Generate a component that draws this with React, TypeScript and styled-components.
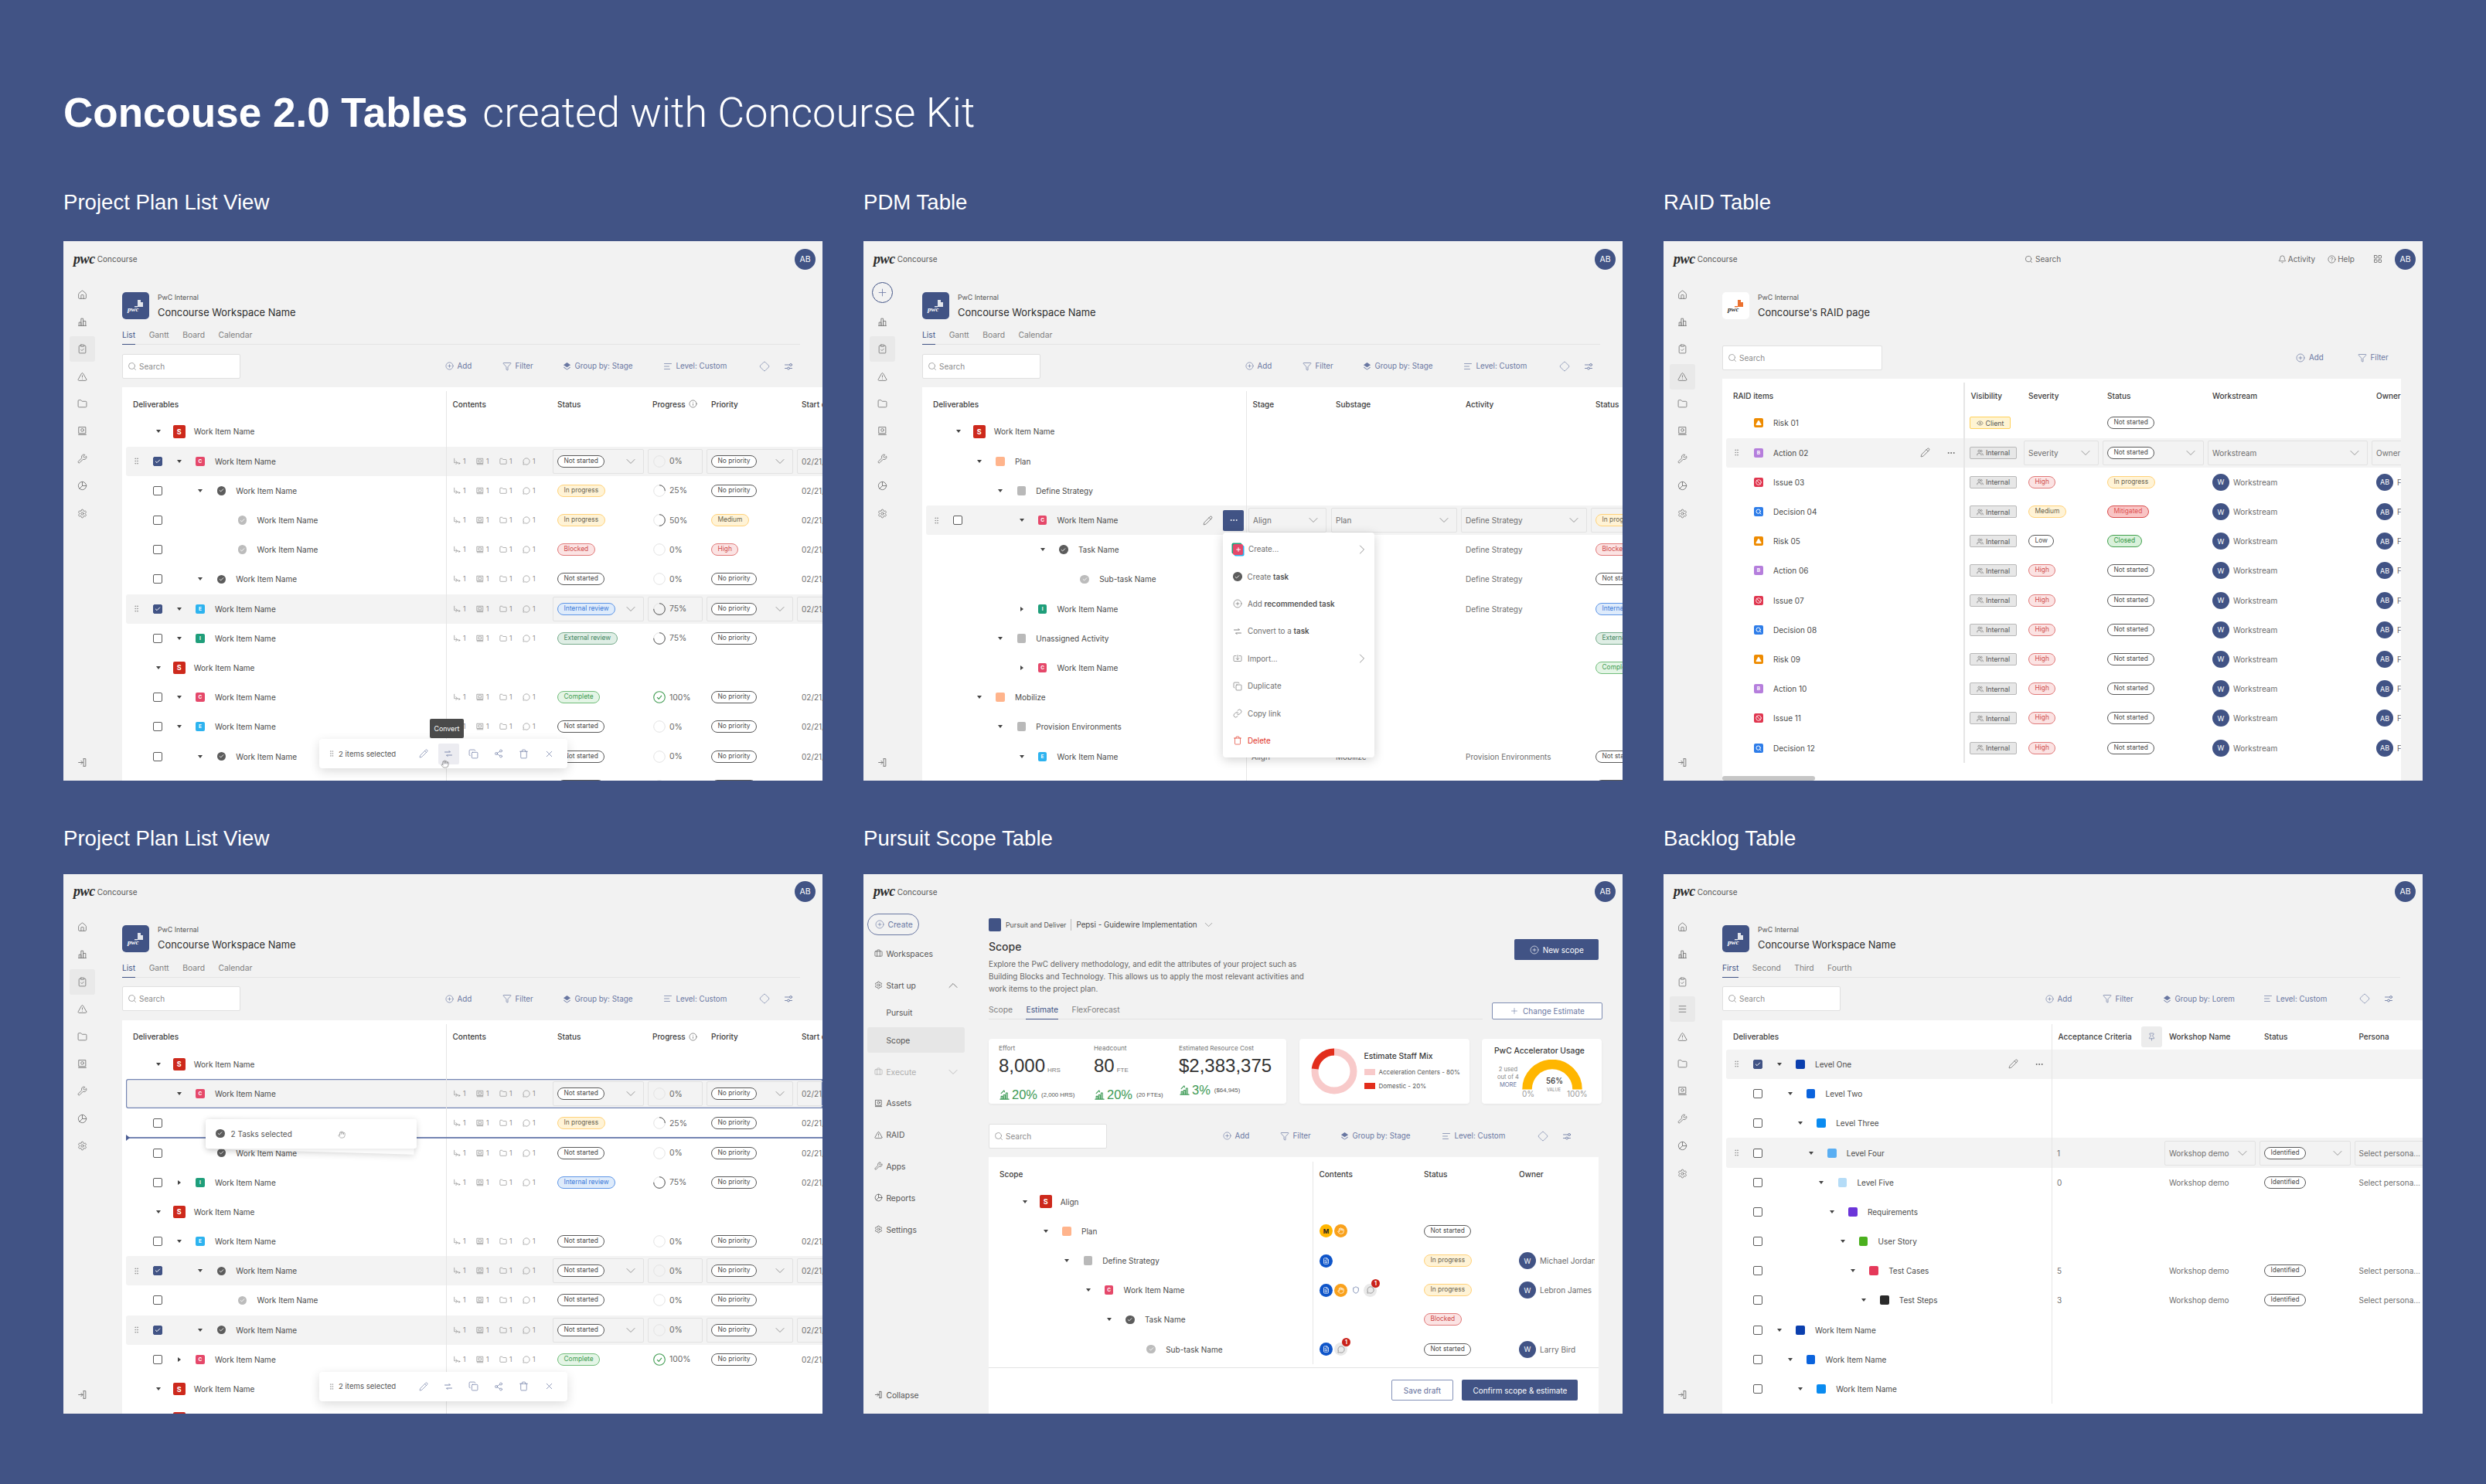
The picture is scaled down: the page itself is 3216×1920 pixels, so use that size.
import React, { ReactNode } from "react";
import styled, { createGlobalStyle } from "styled-components";
import {
    House, ClipboardCheck, TriangleAlert, Folder, Wrench, CirclePlus, Funnel, AlignLeft, Search,
    ChevronDown, ChevronUp, ChevronRight, Ellipsis, Pencil, Copy, Share2, Trash, X, Bell, CircleHelp,
    LayoutGrid, Info, Settings, Plus, Link, Hand, Pin, Users, Eye, Menu as MenuLines, Diamond, Import,
    Check, GripVertical, Briefcase, Ban, FileText, MessageCircle, Shield,
} from "lucide-react";

const BLUE = "#415385";
const TOOL = "#6a78a2";

const GlobalStyle = createGlobalStyle`
    html, body { margin: 0; padding: 0; background: ${BLUE}; }
    body { font-family: Inter, "Liberation Sans", sans-serif; color: #3c3c3c; }
    * { box-sizing: border-box; }
`;

const Page = styled.div`
    width: 3216px;
    height: 1920px;
    padding: 113.5px 82px 0;
    background: ${BLUE};
    overflow: hidden;
`;

const Title = styled.h1`
    margin: 0 0 68.5px;
    height: 64px;
    line-height: 64px;
    font-family: "Liberation Sans", sans-serif;
    font-size: 53px;
    font-weight: 700;
    color: #fff;
    white-space: nowrap;
    span {
        margin-left: 19px;
        font-family: Roboto, sans-serif;
        font-size: 54px;
        font-weight: 300;
    }
`;

const Board = styled.div`
    display: grid;
    grid-template-columns: repeat(3, 982px);
    column-gap: 53px;
    row-gap: 59px;
`;

const Section = styled.section``;

const SectionLabel = styled.h2<{ $tight?: boolean }>`
    margin: 0 0 ${(p) => (p.$tight ? 29.5 : 34)}px;
    height: 32px;
    line-height: 32px;
    font-family: "Liberation Sans", sans-serif;
    font-size: 27.6px;
    font-weight: 400;
    color: #fff;
`;

const PanelFrame = styled.div`
    position: relative;
    height: 698px;
    display: flex;
    flex-direction: column;
    background: #f2f2f2;
    overflow: hidden;
`;

/* top bar */
const TopBar = styled.div`
    position: relative;
    flex: none;
    height: 46px;
    display: flex;
    align-items: center;
    padding: 0 9px 0 13px;
`;

const PwcMark = styled.span`
    font-family: "Liberation Serif", serif;
    font-weight: 700;
    font-style: italic;
    font-size: 18px;
    letter-spacing: -0.4px;
    color: #2b2b2b;
`;

const LogoName = styled.span`
    margin-left: 3px;
    font-size: 10px;
    color: #555;
`;

const GlobalSearch = styled.div`
    position: absolute;
    left: 467px;
    display: flex;
    align-items: center;
    gap: 3px;
    font-size: 10px;
    color: #666;
`;

const TopActions = styled.div`
    margin-left: auto;
    display: flex;
    align-items: center;
    font-size: 10px;
    color: #666;
`;

const TopLink = styled.span<{ $mr?: number }>`
    display: flex;
    align-items: center;
    gap: 2px;
    margin-right: ${(p) => p.$mr ?? 16}px;
`;

const Avatar = styled.span<{ $small?: boolean }>`
    flex: none;
    width: ${(p) => (p.$small ? 22 : 27)}px;
    height: ${(p) => (p.$small ? 22 : 27)}px;
    border-radius: 50%;
    background: ${BLUE};
    color: #fff;
    display: flex;
    align-items: center;
    justify-content: center;
    font-size: ${(p) => (p.$small ? 9 : 10.5)}px;
`;

/* rail */
const Body = styled.div`
    flex: 1;
    min-height: 0;
    display: flex;
`;

const Rail = styled.nav`
    flex: none;
    width: 76px;
    padding: 6.5px 0 7.5px 7.5px;
    display: flex;
    flex-direction: column;
    gap: 2.4px;
    color: #777;
`;

const RailItem = styled.div<{ $on?: boolean; $end?: boolean }>`
    width: 33px;
    height: 33px;
    flex: none;
    display: flex;
    align-items: center;
    justify-content: center;
    border-radius: 3px;
    background: ${(p) => (p.$on ? "#e9e9e9" : "transparent")};
    margin-top: ${(p) => (p.$end ? "auto" : "0")};
`;

const RailCreate = styled.div`
    width: 27px;
    height: 27px;
    margin: 0 0 6px 3px;
    flex: none;
    border: 1px solid ${BLUE};
    border-radius: 50%;
    display: flex;
    align-items: center;
    justify-content: center;
    color: ${TOOL};
`;

const NavRail = styled.nav`
    flex: none;
    width: 162px;
    padding: 5.5px 0 7.5px 5.4px;
    display: flex;
    flex-direction: column;
    font-size: 10.3px;
    color: #555;
`;

const CreatePill = styled.div`
    width: 67px;
    height: 27.5px;
    flex: none;
    border: 1px solid ${TOOL};
    border-radius: 14px;
    display: flex;
    align-items: center;
    gap: 4px;
    padding-left: 9px;
    color: ${TOOL};
`;

const NavItem = styled.div<{ $on?: boolean; $sub?: boolean; $off?: boolean; $end?: boolean }>`
    width: 125.6px;
    height: 33px;
    flex: none;
    margin-top: ${(p) => (p.$end ? "auto" : p.$sub ? "2.6px" : "7.8px")};
    display: flex;
    align-items: center;
    gap: 4px;
    padding: 0 5px 0 ${(p) => (p.$sub ? 24 : 9)}px;
    border-radius: 3px;
    background: ${(p) => (p.$on ? "#e6e6e6" : "transparent")};
    color: ${(p) => (p.$off ? "#aeaeae" : "#555")};
    svg:last-child:not(:first-child) { margin-left: auto; }
`;

/* main column */
const Main = styled.main`
    flex: 1;
    min-width: 0;
    display: flex;
    flex-direction: column;
`;

const WorkspaceHead = styled.div`
    flex: none;
    margin-top: 20px;
    height: 35px;
    display: flex;
    align-items: center;
    gap: 11px;
`;

const WorkspaceLogo = styled.div<{ $light?: boolean }>`
    position: relative;
    width: 35px;
    height: 35px;
    border-radius: 5px;
    background: ${(p) => (p.$light ? "#fff" : BLUE)};
    color: ${(p) => (p.$light ? "#333" : "#fff")};
    display: flex;
    align-items: center;
    padding-left: 7px;
    svg { position: absolute; left: 15px; top: 9px; }
    span { margin-top: 9px; font-family: "Liberation Serif", serif; font-weight: 700; font-style: italic; font-size: 9px; }
`;

const WorkspaceText = styled.div`
    display: flex;
    flex-direction: column;
    gap: 5px;
    small { font-size: 8.8px; line-height: 12px; color: #555; }
    strong { font-size: 12.9px; line-height: 17px; font-weight: 400; color: #2e2e2e; white-space: nowrap; }
`;

const TabBar = styled.div<{ $scope?: boolean }>`
    flex: none;
    display: flex;
    gap: 17.5px;
    height: 23px;
    margin: ${(p) => (p.$scope ? "0" : "10px 29px 0 0")};
    border-bottom: 1px solid #e4e4e4;
    ${(p) => p.$scope && "flex: 1;"}
`;

const Tab = styled.span<{ $on?: boolean }>`
    height: 23px;
    line-height: 20px;
    font-size: 10.3px;
    color: ${(p) => (p.$on ? BLUE : "#808080")};
    border-bottom: ${(p) => (p.$on ? `1.5px solid ${BLUE}` : "none")};
`;

const ToolRow = styled.div<{ $gap?: number }>`
    flex: none;
    margin-top: ${(p) => p.$gap ?? 11.5}px;
    height: 32px;
    display: flex;
    align-items: center;
    position: relative;
    color: ${TOOL};
    font-size: 9.8px;
`;

const SearchBox = styled.div<{ $w?: number }>`
    flex: none;
    width: ${(p) => p.$w ?? 153}px;
    height: 32px;
    background: #fff;
    border: 1px solid #e0e0e0;
    border-radius: 2px;
    padding-left: 6px;
    display: flex;
    align-items: center;
    gap: 3px;
    font-size: 10px;
    color: #8c8c8c;
`;

const ToolItems = styled.div<{ $left: number }>`
    margin-left: ${(p) => p.$left}px;
    display: flex;
    align-items: center;
`;

const ToolItem = styled.span<{ $w: number }>`
    flex: none;
    width: ${(p) => p.$w}px;
    display: flex;
    align-items: center;
    gap: 5px;
    white-space: nowrap;
`;

/* tables */
const TableWrap = styled.div<{ $right?: number; $gap?: number }>`
    flex: 1;
    min-height: 0;
    position: relative;
    margin: ${(p) => p.$gap ?? 11.5}px ${(p) => p.$right ?? 0}px 0 0;
    padding-top: 5.4px;
    background: #fff;
    overflow: hidden;
    display: flex;
    flex-direction: column;
`;

const HeadRow = styled.div`
    flex: none;
    display: flex;
    height: 33px;
    margin-left: 5px;
`;

const HeadTree = styled.div<{ $w: number }>`
    flex: none;
    width: ${(p) => p.$w}px;
    padding-left: 9px;
    display: flex;
    align-items: center;
    font-size: 10px;
    font-weight: 500;
`;

const Columns = styled.div<{ $thick?: boolean }>`
    flex: 1;
    display: flex;
    border-left: ${(p) => (p.$thick ? "2px" : "1px")} solid #e6e6e6;
    min-width: 0;
`;

const HeadCell = styled.div<{ $w: number; $first?: boolean }>`
    flex: none;
    width: ${(p) => p.$w}px;
    padding-left: ${(p) => (p.$first ? 7.5 : 6)}px;
    display: flex;
    align-items: center;
    gap: 4px;
    font-size: 10px;
    font-weight: 500;
    white-space: nowrap;
`;

const PinBox = styled.span`
    margin-left: 8px;
    width: 27px;
    height: 27px;
    border-radius: 3px;
    background: #ececec;
    color: ${TOOL};
    display: flex;
    align-items: center;
    justify-content: center;
`;

const RowLine = styled.div<{ $active?: boolean; $drop?: boolean }>`
    flex: none;
    display: flex;
    height: 38.2px;
    margin-left: 5px;
    background: ${(p) => (p.$active || p.$drop ? "#f3f3f3" : "transparent")};
    border-radius: 3px 0 0 3px;
    box-shadow: ${(p) => (p.$drop ? `inset 0 0 0 1.2px #7485b3` : "none")};
`;

const Tree = styled.div<{ $w: number }>`
    flex: none;
    width: ${(p) => p.$w}px;
    display: flex;
    align-items: center;
    font-size: 10px;
    color: #4a4a4a;
    white-space: nowrap;
`;

const HandleSlot = styled.span`
    flex: none;
    width: 27px;
    display: flex;
    justify-content: center;
    color: #8d8d8d;
`;

const CheckSlot = styled.span`
    flex: none;
    width: 28px;
    display: flex;
    justify-content: center;
`;

const Box = styled.span<{ $on?: boolean }>`
    width: 11.5px;
    height: 12px;
    border-radius: 2px;
    border: 1.2px solid ${(p) => (p.$on ? BLUE : "#5c5c5c")};
    background: ${(p) => (p.$on ? BLUE : "#fff")};
    color: #fff;
    display: flex;
    align-items: center;
    justify-content: center;
`;

const Caret = styled.span<{ $indent: number }>`
    flex: none;
    width: 12px;
    margin-left: ${(p) => p.$indent + 8}px;
    display: flex;
    justify-content: center;
    align-items: center;
    i { display: block; width: 0; height: 0; border-left: 3px solid transparent; border-right: 3px solid transparent; border-top: 4px solid #444; }
    i.right { border-top: 3px solid transparent; border-bottom: 3px solid transparent; border-left: 4px solid #444; border-right: 0; }
`;

const TileSlot = styled.span`
    flex: none;
    width: 18px;
    margin-left: 12px;
    margin-right: 10px;
    display: flex;
    justify-content: center;
`;

const Tile = styled.span<{ $c: string; $big?: boolean }>`
    width: ${(p) => (p.$big ? 16 : 11.5)}px;
    height: ${(p) => (p.$big ? 16.5 : 12)}px;
    border-radius: 2px;
    background: ${(p) => p.$c};
    color: #fff;
    display: flex;
    align-items: center;
    justify-content: center;
    font-size: ${(p) => (p.$big ? 9 : 6.5)}px;
    font-weight: 700;
`;

const Dot = styled.span<{ $c: string }>`
    width: 11.5px;
    height: 11.5px;
    border-radius: 50%;
    background: ${(p) => p.$c};
    color: #fff;
    display: flex;
    align-items: center;
    justify-content: center;
`;

const FlatSlot = styled.span`
    flex: none;
    width: 18px;
    margin: 0 10px 0 6px;
    display: flex;
    justify-content: center;
`;

const RowActions = styled.span`
    margin-left: auto;
    padding-right: 3px;
    display: flex;
    align-items: center;
    gap: 13px;
    color: #666;
`;

const DotsBtn = styled.span<{ $solid?: boolean }>`
    width: 27px;
    height: 27px;
    border-radius: 2px;
    background: ${(p) => (p.$solid ? BLUE : "transparent")};
    color: ${(p) => (p.$solid ? "#fff" : "#666")};
    display: flex;
    align-items: center;
    justify-content: center;
`;

const Cell = styled.div<{ $w: number }>`
    flex: none;
    width: ${(p) => p.$w}px;
    display: flex;
    align-items: center;
`;

const Field = styled.div<{ $edit?: boolean; $inset?: boolean }>`
    width: calc(100% - ${(p) => (p.$inset ? 8 : 5)}px);
    margin-left: ${(p) => (p.$inset ? 2 : 0)}px;
    height: 32px;
    padding: 0 6px 0 5px;
    border: 1px solid ${(p) => (p.$edit ? "#e2e2e2" : "transparent")};
    border-radius: 2px;
    display: flex;
    align-items: center;
    justify-content: space-between;
    font-size: 10px;
    color: #6e6e6e;
    white-space: nowrap;
    overflow: hidden;
    svg.chev { flex: none; color: #777; }
`;

const Counts = styled.div`
    margin-left: 2px;
    display: flex;
    color: #8c8c8c;
    font-size: 8.5px;
`;

const Count = styled.span`
    flex: none;
    width: 30px;
    display: flex;
    align-items: center;
    gap: 3px;
`;

const Chip = styled.span<{ $kind: string }>`
    flex: none;
    height: 16px;
    line-height: 13.5px;
    padding: 0 7.5px;
    border-radius: 8px;
    font-size: 8.4px;
    border: 1.1px solid ${(p) => chipColors[p.$kind][1]};
    background: ${(p) => chipColors[p.$kind][0]};
    color: ${(p) => chipColors[p.$kind][2]};
`;

const chipColors: Record<string, [string, string, string]> = {
    plain: ["#fff", "#5a5a5a", "#4a4a4a"],
    progress: ["#fff3d6", "#ffd27a", "#6a6350"],
    blocked: ["#fbe3e3", "#e07a7a", "#cf4a4a"],
    internal: ["#deebfb", "#5e95e6", "#3a78d8"],
    external: ["#dfeee5", "#77ab8c", "#3f8560"],
    complete: ["#e4f5e6", "#71bd7a", "#3f9b50"],
    mitigated: ["#f9c4c4", "#d94c4c", "#dd5050"],
    closed: ["#d9f1db", "#42a04e", "#2f9440"],
};

const RingWrap = styled.span`
    display: flex;
    align-items: center;
    gap: 5px;
    margin-left: 1px;
    font-size: 10.4px;
    color: #666;
`;

const Person = styled.span`
    display: flex;
    align-items: center;
    gap: 5px;
    font-size: 10px;
    color: #6a6a6a;
`;

const VisTag = styled.span<{ $client?: boolean }>`
    flex: none;
    height: 16px;
    width: ${(p) => (p.$client ? 53 : 61)}px;
    border-radius: 2px;
    border: 1px solid ${(p) => (p.$client ? "#ffd15c" : "#b8b8b8")};
    background: ${(p) => (p.$client ? "#fff4d2" : "#e7e7e7")};
    display: flex;
    align-items: center;
    justify-content: center;
    gap: 3px;
    font-size: 8.8px;
    color: #555;
`;

const Scrollbar = styled.div`
    position: absolute;
    left: 0;
    bottom: 0;
    width: 120px;
    height: 6px;
    border-radius: 3px;
    background: #c6c6c6;
`;

/* overlays */
const BulkBar = styled.div`
    position: absolute;
    left: 331px;
    top: 644px;
    width: 321px;
    height: 38px;
    background: #fff;
    border-radius: 4px;
    box-shadow: 0 4px 14px rgba(0, 0, 0, 0.14);
    display: flex;
    align-items: center;
    padding-left: 11px;
    color: ${TOOL};
    font-size: 9.6px;
    z-index: 3;
    > b { font-weight: 400; color: #555; margin: 0 17px 0 4px; white-space: nowrap; width: 79px; }
`;

const BulkIcon = styled.span<{ $on?: boolean }>`
    flex: none;
    width: 27px;
    height: 27px;
    margin-right: 5.6px;
    border-radius: 2px;
    background: ${(p) => (p.$on ? "#ececf1" : "transparent")};
    display: flex;
    align-items: center;
    justify-content: center;
`;

const HintBubble = styled.div`
    position: absolute;
    left: 474px;
    top: 618px;
    width: 44px;
    height: 25px;
    border-radius: 2px;
    background: #4a4a4a;
    color: #fff;
    font-size: 8.8px;
    display: flex;
    align-items: center;
    justify-content: center;
    z-index: 4;
`;

const CursorHand = styled.span`
    position: absolute;
    left: 488px;
    top: 666px;
    color: #777;
    z-index: 5;
`;

const FloatMenu = styled.div`
    position: absolute;
    left: 465px;
    top: 377px;
    width: 196px;
    height: 291px;
    padding: 4px 0;
    background: #fff;
    border-radius: 4px;
    box-shadow: 0 3px 14px rgba(0, 0, 0, 0.18);
    z-index: 3;
`;

const MenuRow = styled.div<{ $danger?: boolean }>`
    height: 35.4px;
    display: flex;
    align-items: center;
    gap: 7px;
    padding: 0 6px 0 13px;
    font-size: 9.8px;
    color: ${(p) => (p.$danger ? "#e0301e" : "#6e6e6e")};
    b { font-weight: 600; color: #555; }
    > svg:last-child:not(:first-child) { margin-left: auto; }
`;

const CreateIcon = styled.span`
    flex: none;
    width: 13px;
    height: 14px;
    border-radius: 2px;
    background: #e5486a;
    color: #fff;
    box-shadow: -1.5px -1.5px 0 #1f9e7a, 1.5px 1.5px 0 #2db3ef;
    display: flex;
    align-items: center;
    justify-content: center;
`;

const DropLine = styled.div`
    position: absolute;
    left: 81px;
    right: 0;
    top: 340px;
    height: 2px;
    background: #7485b3;
    z-index: 2;
    &::before {
        content: "";
        position: absolute;
        left: 0;
        top: -3px;
        border-left: 5px solid #4c5e94;
        border-top: 4px solid transparent;
        border-bottom: 4px solid transparent;
    }
`;

const GhostBack = styled.div`
    position: absolute;
    left: 186px;
    top: 322px;
    width: 268px;
    height: 37px;
    background: #fff;
    transform: rotate(1.6deg);
    box-shadow: 0 2px 8px rgba(0, 0, 0, 0.14);
    z-index: 3;
`;

const GhostCard = styled.div`
    position: absolute;
    left: 184px;
    top: 317px;
    width: 273px;
    height: 38px;
    background: #fff;
    border-radius: 3px;
    box-shadow: 0 1px 8px rgba(0, 0, 0, 0.12);
    display: flex;
    align-items: center;
    gap: 8px;
    padding-left: 13px;
    font-size: 10px;
    color: #555;
    z-index: 4;
    em { position: absolute; left: 171px; top: 15px; color: #888; font-style: normal; display: flex; }
`;

/* scope page */
const Crumbs = styled.div`
    flex: none;
    height: 17px;
    margin-top: 11px;
    display: flex;
    align-items: center;
    font-size: 8.8px;
    color: #555;
    white-space: nowrap;
    > i { display: block; width: 16px; height: 17px; margin-right: 6px; border-radius: 2px; background: ${BLUE}; }
    > u { display: block; width: 1px; height: 15px; margin: 0 6px; background: #bbb; }
    > b { font-weight: 400; font-size: 9.8px; color: #4a4a4a; margin-right: 6px; }
    svg { color: #888; }
`;

const ScopeHead = styled.div`
    flex: none;
    display: flex;
    margin-right: 31px;
    justify-content: space-between;
    h3 { margin: 11px 0 6px; font-size: 14px; line-height: 17px; font-weight: 500; color: #3a3a3a; }
    p { margin: 0; width: 410px; font-size: 9.9px; line-height: 16.4px; color: #666; }
`;

const SolidBtn = styled.div<{ $w: number }>`
    flex: none;
    width: ${(p) => p.$w}px;
    height: 27px;
    background: ${BLUE};
    color: #fff;
    border-radius: 2px;
    display: flex;
    align-items: center;
    justify-content: center;
    gap: 5px;
    font-size: 10px;
    margin-top: 10.5px;
`;

const GhostBtn = styled(SolidBtn)`
    margin-top: 0;
    background: #fff;
    color: ${TOOL};
    border: 1px solid #7e8cb2;
`;

const ChangeBtn = styled(GhostBtn)`
    height: 22px;
`;

const ScopeTabs = styled.div`
    flex: none;
    display: flex;
    align-items: flex-end;
    gap: 12px;
    height: 22px;
    margin: 9px 26px 0 0;
`;

const Cards = styled.div`
    flex: none;
    display: flex;
    gap: 16.5px;
    margin: 25px 26px 0 0;
    height: 84.6px;
`;

const Card = styled.div<{ $w: number }>`
    flex: none;
    width: ${(p) => p.$w}px;
    background: #fff;
    border-radius: 4px;
    box-shadow: 0 1px 3px rgba(0, 0, 0, 0.06);
    display: flex;
`;

const MetricsCard = styled(Card)`
    padding-left: 13px;
`;

const MixCard = styled(Card)`
    padding-left: 15px;
    align-items: center;
`;

const Metric = styled.div<{ $w: number }>`
    flex: none;
    width: ${(p) => p.$w}px;
    padding-top: 7px;
    white-space: nowrap;
    small { display: block; font-size: 8.2px; line-height: 11px; color: #777; }
`;

const BigNum = styled.div`
    margin-top: 2px;
    line-height: 30px;
    font-family: "Liberation Sans", sans-serif;
    font-size: 24px;
    color: #333;
    span { margin-left: 3px; font-size: 8px; color: #777; }
`;

const Trend = styled.div`
    margin-top: 7px;
    height: 20px;
    display: flex;
    align-items: center;
    gap: 2px;
    color: #3d9a55;
    font-family: "Liberation Sans", sans-serif;
    font-size: 16.5px;
    span { margin-left: 3px; font-size: 7.8px; color: #555; }
`;

const MixText = styled.div`
    margin-left: 9px;
    display: flex;
    flex-direction: column;
    justify-content: center;
    font-size: 8px;
    color: #555;
    h4 { margin: 0 0 6px; font-size: 10.3px; line-height: 14px; font-weight: 500; color: #3a3a3a; }
`;

const Legend = styled.div<{ $c: string }>`
    display: flex;
    align-items: center;
    gap: 5px;
    height: 17.5px;
    white-space: nowrap;
    i { display: block; width: 14px; height: 8px; background: ${(p) => p.$c}; }
`;

const UsageCard = styled(Card)`
    display: block;
    padding: 8px 0 0 16px;
    h4 { margin: 0 0 5px; font-size: 10.3px; line-height: 14px; font-weight: 500; color: #3a3a3a; white-space: nowrap; }
`;

const UsageRow = styled.div`
    display: flex;
`;

const UsedNote = styled.div`
    width: 36px;
    margin-top: 8px;
    font-size: 7.6px;
    line-height: 10px;
    text-align: center;
    color: #888;
    b { font-weight: 400; color: ${TOOL}; }
`;

const Gauge = styled.div`
    position: relative;
    width: 86px;
    height: 50px;
    span { position: absolute; white-space: nowrap; }
    .pct { left: 31px; top: 22px; font-size: 9.8px; font-weight: 500; color: #333; }
    .val { left: 32px; top: 36px; font-size: 5.6px; color: #888; }
    .lo { left: 0; top: 38px; font-size: 10px; color: #999; }
    .hi { left: 58px; top: 38px; font-size: 10px; color: #999; }
`;

const Badges = styled.div`
    margin-left: 2px;
    display: flex;
    gap: 2px;
`;

const Badge = styled.span<{ $c: string; $ink?: string }>`
    position: relative;
    width: 17px;
    height: 17px;
    border-radius: 50%;
    background: ${(p) => p.$c};
    color: ${(p) => p.$ink ?? "#fff"};
    display: flex;
    align-items: center;
    justify-content: center;
    font-size: 8px;
    font-weight: 700;
    i { position: absolute; right: -4px; top: -6px; width: 11px; height: 11px; border-radius: 50%; background: #c9221a; color: #fff; font-style: normal; font-size: 7px; text-align: center; line-height: 11px; }
`;

const TableFoot = styled.div`
    flex: none;
    margin-top: 4px;
    height: 60px;
    border-top: 1px solid #e3e3e3;
    display: flex;
    justify-content: flex-end;
    gap: 11.5px;
    padding: 15.5px 27px 0 0;
`;

const FootGhost = styled(GhostBtn)`
    border-color: #8492b8;
    color: #5f6e9a;
`;

const FootSolid = styled(SolidBtn)`
    margin-top: 0;
`;

/* little drawings */
const S = ({ size = 12, children }: { size?: number; children: ReactNode }) => (
    <svg width={size} height={size} viewBox="0 0 24 24" fill="none" stroke="currentColor" strokeWidth="1.7" strokeLinecap="round" strokeLinejoin="round">
        {children}
    </svg>
);

const ChartGlyph = ({ size = 13 }: { size?: number }) => (
    <S size={size}><path d="M3 21h18M4 21v-8h5v8M9 21V4h5v17M14 21v-11h6v11" /></S>
);
const AssetGlyph = ({ size = 13 }: { size?: number }) => (
    <S size={size}><rect x="4" y="3" width="16" height="15" /><circle cx="12" cy="10" r="3.4" /><path d="M3 21h18" /></S>
);
const ReportGlyph = ({ size = 13 }: { size?: number }) => (
    <S size={size}><circle cx="12" cy="12" r="9.5" /><path d="M12 2.5V12l-6.6 6.8M12 12h9.5" /></S>
);
const CollapseGlyph = ({ size = 13 }: { size?: number }) => (
    <S size={size}><path d="M15 3h5v18h-5M3 12h10M9 8l4 4-4 4" /><path d="M15 3v18" /></S>
);
const SubGlyph = () => (
    <S size={10}><path d="M4 3v13h10" /><path d="M9 11l5 5-5 5" /><circle cx="19" cy="18" r="2" /></S>
);
const GroupGlyph = () => (
    <svg width="11" height="11" viewBox="0 0 24 24" fill="currentColor"><path d="M12 2 2 9l10 7 10-7z" /><path d="M3 14l9 7 9-7v3l-9 6-9-6z" /></svg>
);
const SliderGlyph = () => (
    <S size={12}><path d="M3 8h11M3 17h5" /><circle cx="18" cy="8" r="3" /><circle cx="12" cy="17" r="3" /><path d="M15 17h6" /></S>
);
const Buildings = ({ c = "#fff" }: { c?: string }) => (
    <svg width="13" height="14" viewBox="0 0 13 14" fill={c} opacity="0.85"><rect x="5" y="1" width="4" height="9" /><rect x="9" y="4" width="3" height="6" /><rect x="1" y="9" width="4" height="1.4" /></svg>
);
const TrendGlyph = () => (
    <S size={15}><path d="M3 21h18M5 21v-6h3v6M10 21v-9h3v9M15 21V8h3v13M5 9l6-6 1 3" /></S>
);

const iconMap: Record<string, ReactNode> = {
    S: <Tile $c="#cd291c" $big>S</Tile>,
    C: <Tile $c="#e5486a">C</Tile>,
    E: <Tile $c="#2db3ef">E</Tile>,
    I: <Tile $c="#1f9e7a">I</Tile>,
    plan: <Tile $c="#ffb48c" />,
    gray: <Tile $c="#b9b9b9" />,
    task: <Dot $c="#5c5c5c"><Check size={7} strokeWidth={3} /></Dot>,
    sub: <Dot $c="#bcbcbc"><Check size={7} strokeWidth={3} /></Dot>,
    risk: <Tile $c="#ee8b00"><TriangleAlert size={8} fill="#fff" strokeWidth={1} /></Tile>,
    action: <Tile $c="#b57edc">B</Tile>,
    issue: <Tile $c="#e0364f"><Ban size={8} strokeWidth={2.4} /></Tile>,
    decision: <Tile $c="#2e7de9"><Search size={8} strokeWidth={3} /></Tile>,
    l1: <Tile $c="#0b3fae" />,
    l2: <Tile $c="#0a63dd" />,
    l3: <Tile $c="#0a8bf0" />,
    l4: <Tile $c="#5aaef2" />,
    l5: <Tile $c="#b5dcf7" />,
    req: <Tile $c="#6b35d9" />,
    story: <Tile $c="#4bb01e" />,
    cases: <Tile $c="#e5395a" />,
    steps: <Tile $c="#2a2a2a" />,
};

type CellData = { n?: ReactNode; chev?: boolean };

interface RowData {
    level: number;
    icon: string;
    name: string;
    caret?: "down" | "right";
    check?: "on" | "off";
    active?: boolean;
    drop?: boolean;
    tools?: "plain" | "solid";
    cells?: CellData[];
}

const Ring = ({ pct }: { pct: number }) => {
    if (pct === 100) {
        return (
            <svg width="16" height="16" viewBox="0 0 16 16" fill="none" stroke="#3f9b50">
                <circle cx="8" cy="8" r="7.3" strokeWidth="1.1" />
                <path d="M5 8.2 7.2 10.4 11 5.8" strokeWidth="1.1" />
            </svg>
        );
    }
    const r = 7.3;
    const len = 2 * Math.PI * r;
    return (
        <svg width="16" height="16" viewBox="0 0 16 16" fill="none">
            <circle cx="8" cy="8" r={r} stroke="#e3e3e3" strokeWidth="1" />
            {pct > 0 && <circle cx="8" cy="8" r={r} stroke="#555" strokeWidth="1" strokeDasharray={`${(len * pct) / 100} ${len}`} transform="rotate(-90 8 8)" />}
        </svg>
    );
};

const kindOf: Record<string, string> = {
    "Not started": "plain", "No priority": "plain", Low: "plain", Identified: "plain",
    "In progress": "progress", Medium: "progress",
    Blocked: "blocked", High: "blocked",
    "Internal review": "internal", "External review": "external",
    Complete: "complete", Mitigated: "mitigated", Closed: "closed",
};

const chip = (label: string) => <Chip $kind={kindOf[label]}>{label}</Chip>;

const counts = () => (
    <Counts>
        <Count><SubGlyph />1</Count>
        <Count><S size={10}><rect x="3" y="3" width="18" height="15" /><rect x="8" y="7" width="8" height="7" /><path d="M3 21h18" /></S>1</Count>
        <Count><Folder size={10} strokeWidth={1.6} />1</Count>
        <Count><MessageCircle size={10} strokeWidth={1.6} />1</Count>
    </Counts>
);

const planCells = (status: string, pct: number, priority: string, date = true, edit = false): CellData[] => [
    { n: counts() },
    { n: chip(status), chev: edit },
    { n: <RingWrap><Ring pct={pct} />{pct}%</RingWrap> },
    { n: chip(priority), chev: edit },
    { n: date ? "02/21/2024" : "" },
];

const PLAN_COLS = [137, 123, 76, 117, 90];

const Chev = () => <ChevronDown className="chev" size={20} strokeWidth={0.9} />;

const TreeRow = ({ row, w, step, cols, thick }: { row: RowData; w: number; step: number; cols: number[]; thick?: boolean }) => {
    const edit = !!(row.active || row.drop);
    return (
        <RowLine $active={row.active} $drop={row.drop}>
            <Tree $w={w}>
                <HandleSlot>{row.active && <GripVertical size={11} strokeWidth={1.6} />}</HandleSlot>
                <CheckSlot>
                    {row.check && <Box $on={row.check === "on"}>{row.check === "on" && <Check size={8} strokeWidth={3} />}</Box>}
                </CheckSlot>
                <Caret $indent={(row.level - 1) * step}>
                    {row.caret && <i className={row.caret === "right" ? "right" : ""} />}
                </Caret>
                <TileSlot>{iconMap[row.icon]}</TileSlot>
                {row.name}
                {row.tools && (
                    <RowActions>
                        <Pencil size={13} strokeWidth={1.4} />
                        <DotsBtn $solid={row.tools === "solid"}><Ellipsis size={12} /></DotsBtn>
                    </RowActions>
                )}
            </Tree>
            <Columns $thick={thick}>
                {cols.map((cw, i) => {
                    const cell = row.cells?.[i];
                    const boxed = edit && !!cell && i > 0;
                    return (
                        <Cell key={i} $w={cw}>
                            {cell && (
                                <Field $edit={boxed || (edit && cell.chev)} $inset={i === 0 && cell.chev}>
                                    {cell.n}
                                    {cell.chev && <Chev />}
                                </Field>
                            )}
                        </Cell>
                    );
                })}
            </Columns>
        </RowLine>
    );
};

const TableHead = ({ label, w, cols, titles, thick }: { label: string; w: number; cols: number[]; titles: ReactNode[]; thick?: boolean }) => (
    <HeadRow>
        <HeadTree $w={w}>{label}</HeadTree>
        <Columns $thick={thick}>
            {cols.map((cw, i) => (
                <HeadCell key={i} $w={cw} $first={i === 0}>{titles[i]}</HeadCell>
            ))}
        </Columns>
    </HeadRow>
);

const TopNav = ({ search }: { search?: boolean }) => (
    <TopBar>
        <PwcMark>pwc</PwcMark>
        <LogoName>Concourse</LogoName>
        {search && <GlobalSearch><Search size={11} strokeWidth={1.6} />Search</GlobalSearch>}
        <TopActions>
            {search && (
                <>
                    <TopLink><Bell size={11} strokeWidth={1.6} />Activity</TopLink>
                    <TopLink $mr={24}><CircleHelp size={11} strokeWidth={1.6} />Help</TopLink>
                    <TopLink><LayoutGrid size={12} strokeWidth={1.6} /></TopLink>
                </>
            )}
            <Avatar>AB</Avatar>
        </TopActions>
    </TopBar>
);

const railIcons: Record<string, ReactNode> = {
    home: <House size={13} strokeWidth={1.6} />,
    chart: <ChartGlyph />,
    plan: <ClipboardCheck size={13} strokeWidth={1.6} />,
    list: <MenuLines size={13} strokeWidth={1.6} />,
    risk: <TriangleAlert size={13} strokeWidth={1.6} />,
    folder: <Folder size={13} strokeWidth={1.6} />,
    asset: <AssetGlyph />,
    tool: <Wrench size={13} strokeWidth={1.6} />,
    report: <ReportGlyph />,
    gear: <Settings size={13} strokeWidth={1.6} />,
};

const SideRail = ({ items, on, create }: { items: string[]; on: string; create?: boolean }) => (
    <Rail>
        {create && <RailCreate><Plus size={15} strokeWidth={1.3} /></RailCreate>}
        {items.map((k) => (
            <RailItem key={k} $on={k === on}>{railIcons[k]}</RailItem>
        ))}
        <RailItem $end><CollapseGlyph /></RailItem>
    </Rail>
);

const Workspace = ({ name, light }: { name: string; light?: boolean }) => (
    <WorkspaceHead>
        <WorkspaceLogo $light={light}>
            <Buildings c={light ? "#e8590c" : "#fff"} />
            <span>pwc</span>
        </WorkspaceLogo>
        <WorkspaceText>
            <small>PwC Internal</small>
            <strong>{name}</strong>
        </WorkspaceText>
    </WorkspaceHead>
);

const Tabs = ({ items }: { items: string[] }) => (
    <TabBar>
        {items.map((t, i) => (
            <Tab key={t} $on={i === 0}>{t}</Tab>
        ))}
    </TabBar>
);

const Tools = ({ group, left = 264.5, w }: { group: string; left?: number; w?: number }) => (
    <ToolRow>
        <SearchBox $w={w}><Search size={12} strokeWidth={1.5} />Search</SearchBox>
        <ToolItems $left={left}>
            <ToolItem $w={74}><CirclePlus size={11} strokeWidth={1.4} />Add</ToolItem>
            <ToolItem $w={78}><Funnel size={12} strokeWidth={1.4} />Filter</ToolItem>
            <ToolItem $w={130}><GroupGlyph />{group}</ToolItem>
            <ToolItem $w={124}><AlignLeft size={12} strokeWidth={1.4} />Level: Custom</ToolItem>
            <ToolItem $w={32.5}><Diamond size={14} strokeWidth={1.1} /></ToolItem>
            <ToolItem $w={20}><SliderGlyph /></ToolItem>
        </ToolItems>
    </ToolRow>
);

const BulkSelection = ({ on }: { on?: boolean }) => (
    <BulkBar>
        <GripVertical size={10} color="#999" strokeWidth={1.6} />
        <b>2 items selected</b>
        <BulkIcon><Pencil size={12} strokeWidth={1.3} /></BulkIcon>
        <BulkIcon $on={on}><S size={12}><path d="M3 8h14l-3-3M21 16H7l3 3" /></S></BulkIcon>
        <BulkIcon><Copy size={13} strokeWidth={1.3} /></BulkIcon>
        <BulkIcon><Share2 size={12} strokeWidth={1.3} /></BulkIcon>
        <BulkIcon><Trash size={13} strokeWidth={1.3} /></BulkIcon>
        <BulkIcon><X size={13} strokeWidth={1.3} /></BulkIcon>
    </BulkBar>
);

const PLAN_ITEMS = ["home", "chart", "plan", "risk", "folder", "asset", "tool", "report", "gear"];
const PLAN_TITLES = ["Contents", "Status", <>Progress <Info size={11} strokeWidth={1.2} /></>, "Priority", "Start date"];

const planRowsA: RowData[] = [
    { level: 0, icon: "S", name: "Work Item Name", caret: "down" },
    { level: 1, icon: "C", name: "Work Item Name", caret: "down", check: "on", active: true, cells: planCells("Not started", 0, "No priority", true, true) },
    { level: 2, icon: "task", name: "Work Item Name", caret: "down", check: "off", cells: planCells("In progress", 25, "No priority") },
    { level: 3, icon: "sub", name: "Work Item Name", check: "off", cells: planCells("In progress", 50, "Medium") },
    { level: 3, icon: "sub", name: "Work Item Name", check: "off", cells: planCells("Blocked", 0, "High") },
    { level: 2, icon: "task", name: "Work Item Name", caret: "down", check: "off", cells: planCells("Not started", 0, "No priority") },
    { level: 1, icon: "E", name: "Work Item Name", caret: "down", check: "on", active: true, cells: planCells("Internal review", 75, "No priority", true, true) },
    { level: 1, icon: "I", name: "Work Item Name", caret: "down", check: "off", cells: planCells("External review", 75, "No priority", false) },
    { level: 0, icon: "S", name: "Work Item Name", caret: "down" },
    { level: 1, icon: "C", name: "Work Item Name", caret: "down", check: "off", cells: planCells("Complete", 100, "No priority") },
    { level: 1, icon: "E", name: "Work Item Name", caret: "down", check: "off", cells: planCells("Not started", 0, "No priority") },
    { level: 2, icon: "task", name: "Work Item Name", caret: "down", check: "off", cells: planCells("Not started", 0, "No priority") },
    { level: 2, icon: "task", name: "", cells: planCells("Not started", 0, "No priority") },
];

const planRowsB: RowData[] = [
    { level: 0, icon: "S", name: "Work Item Name", caret: "down" },
    { level: 1, icon: "C", name: "Work Item Name", caret: "down", drop: true, cells: planCells("Not started", 0, "No priority", true, true) },
    { level: 2, icon: "task", name: "Work Item Name", check: "off", cells: planCells("In progress", 25, "No priority") },
    { level: 2, icon: "task", name: "Work Item Name", check: "off", cells: planCells("Not started", 0, "No priority") },
    { level: 1, icon: "I", name: "Work Item Name", caret: "right", check: "off", cells: planCells("Internal review", 75, "No priority") },
    { level: 0, icon: "S", name: "Work Item Name", caret: "down" },
    { level: 1, icon: "E", name: "Work Item Name", caret: "down", check: "off", cells: planCells("Not started", 0, "No priority") },
    { level: 2, icon: "task", name: "Work Item Name", caret: "down", check: "on", active: true, cells: planCells("Not started", 0, "No priority", true, true) },
    { level: 3, icon: "sub", name: "Work Item Name", check: "off", cells: planCells("Not started", 0, "No priority", false) },
    { level: 2, icon: "task", name: "Work Item Name", caret: "down", check: "on", active: true, cells: planCells("Not started", 0, "No priority", true, true) },
    { level: 1, icon: "C", name: "Work Item Name", caret: "right", check: "off", cells: planCells("Complete", 100, "No priority") },
    { level: 0, icon: "S", name: "Work Item Name", caret: "down" },
    { level: 0, icon: "S", name: "" },
];

const PlanPanel = ({ rows, children }: { rows: RowData[]; children: ReactNode }) => (
    <PanelFrame>
        <TopNav />
        <Body>
            <SideRail items={PLAN_ITEMS} on="plan" />
            <Main>
                <Workspace name="Concourse Workspace Name" />
                <Tabs items={["List", "Gantt", "Board", "Calendar"]} />
                <Tools group="Group by: Stage" />
                <TableWrap>
                    <TableHead label="Deliverables" w={414} cols={PLAN_COLS} titles={PLAN_TITLES} />
                    {rows.map((r, i) => (
                        <TreeRow key={i} row={r} w={414} step={27.3} cols={PLAN_COLS} />
                    ))}
                </TableWrap>
            </Main>
        </Body>
        {children}
    </PanelFrame>
);

/* PDM */
const PDM_COLS = [109, 168, 168, 100];
const gray = (t: string, edit = false): CellData => ({ n: t, chev: edit });
const pdm = (status: string, stage = "Align", sub = "Plan", act = "Define Strategy"): CellData[] => [gray(stage), gray(sub), gray(act), { n: chip(status) }];

const pdmRows: RowData[] = [
    { level: 0, icon: "S", name: "Work Item Name", caret: "down" },
    { level: 1, icon: "plan", name: "Plan", caret: "down" },
    { level: 2, icon: "gray", name: "Define Strategy", caret: "down" },
    { level: 3, icon: "C", name: "Work Item Name", caret: "down", check: "off", active: true, tools: "solid", cells: [gray("Align", true), gray("Plan", true), gray("Define Strategy", true), { n: chip("In progress") }] },
    { level: 4, icon: "task", name: "Task Name", caret: "down", cells: pdm("Blocked") },
    { level: 5, icon: "sub", name: "Sub-task Name", cells: pdm("Not started") },
    { level: 3, icon: "I", name: "Work Item Name", caret: "right", cells: pdm("Internal review") },
    { level: 2, icon: "gray", name: "Unassigned Activity", caret: "down", cells: [{}, {}, {}, { n: chip("External review") }] },
    { level: 3, icon: "C", name: "Work Item Name", caret: "right", cells: [{}, {}, {}, { n: chip("Complete") }] },
    { level: 1, icon: "plan", name: "Mobilize", caret: "down" },
    { level: 2, icon: "gray", name: "Provision Environments", caret: "down" },
    { level: 3, icon: "E", name: "Work Item Name", caret: "down", cells: pdm("Not started", "Align", "Mobilize", "Provision Environments") },
    { level: 3, icon: "gray", name: "", cells: [{}, {}, {}, { n: chip("Not started") }] },
];

const PdmPanel = () => (
    <PanelFrame>
        <TopNav />
        <Body>
            <SideRail create items={["chart", "plan", "risk", "folder", "asset", "tool", "report", "gear"]} on="plan" />
            <Main>
                <Workspace name="Concourse Workspace Name" />
                <Tabs items={["List", "Gantt", "Board", "Calendar"]} />
                <Tools group="Group by: Stage" />
                <TableWrap>
                    <TableHead label="Deliverables" w={414} cols={PDM_COLS} titles={["Stage", "Substage", "Activity", "Status"]} />
                    {pdmRows.map((r, i) => (
                        <TreeRow key={i} row={r} w={414} step={27.3} cols={PDM_COLS} />
                    ))}
                </TableWrap>
            </Main>
        </Body>
        <FloatMenu>
            <MenuRow><CreateIcon><Plus size={8} strokeWidth={3} /></CreateIcon>Create...<ChevronRight size={20} strokeWidth={0.9} /></MenuRow>
            <MenuRow><Dot $c="#5c5c5c"><Check size={7} strokeWidth={3} /></Dot><span>Create <b>task</b></span></MenuRow>
            <MenuRow><CirclePlus size={12} strokeWidth={1.3} /><span>Add <b>recommended task</b></span></MenuRow>
            <MenuRow><S size={12}><path d="M3 8h14l-3-3M21 16H7l3 3" /></S><span>Convert to a <b>task</b></span></MenuRow>
            <MenuRow><Import size={12} strokeWidth={1.3} />Import...<ChevronRight size={20} strokeWidth={0.9} /></MenuRow>
            <MenuRow><Copy size={12} strokeWidth={1.3} />Duplicate</MenuRow>
            <MenuRow><Link size={12} strokeWidth={1.3} />Copy link</MenuRow>
            <MenuRow $danger><Trash size={12} strokeWidth={1.3} />Delete</MenuRow>
        </FloatMenu>
    </PanelFrame>
);

/* RAID */
const RAID_COLS = [76, 102, 136, 212, 80];
const internalTag = <VisTag><Users size={9} strokeWidth={1.5} />Internal</VisTag>;
const wsCell = <Person><Avatar $small>W</Avatar>Workstream</Person>;
const ownerCell = <Person><Avatar $small>AB</Avatar>First Last</Person>;
const raid = (sev: string, status: string): CellData[] => [{ n: internalTag }, { n: chip(sev) }, { n: chip(status) }, { n: wsCell }, { n: ownerCell }];

const raidRows: { icon: string; name: string; cells: CellData[]; active?: boolean }[] = [
    { icon: "risk", name: "Risk 01", cells: [{ n: <VisTag $client><Eye size={9} strokeWidth={1.5} />Client</VisTag> }, {}, { n: chip("Not started") }] },
    { icon: "action", name: "Action 02", active: true, cells: [{ n: internalTag }, { n: "Severity", chev: true }, { n: chip("Not started"), chev: true }, { n: "Workstream", chev: true }, { n: "Owner" }] },
    { icon: "issue", name: "Issue 03", cells: raid("High", "In progress") },
    { icon: "decision", name: "Decision 04", cells: raid("Medium", "Mitigated") },
    { icon: "risk", name: "Risk 05", cells: raid("Low", "Closed") },
    { icon: "action", name: "Action 06", cells: raid("High", "Not started") },
    { icon: "issue", name: "Issue 07", cells: raid("High", "Not started") },
    { icon: "decision", name: "Decision 08", cells: raid("High", "Not started") },
    { icon: "risk", name: "Risk 09", cells: raid("High", "Not started") },
    { icon: "action", name: "Action 10", cells: raid("High", "Not started") },
    { icon: "issue", name: "Issue 11", cells: raid("High", "Not started") },
    { icon: "decision", name: "Decision 12", cells: raid("High", "Not started") },
];

const RaidPanel = () => (
    <PanelFrame>
        <TopNav search />
        <Body>
            <SideRail items={PLAN_ITEMS} on="risk" />
            <Main>
                <Workspace light name="Concourse's RAID page" />
                <ToolRow $gap={33.5}>
                    <SearchBox $w={207}><Search size={12} strokeWidth={1.5} />Search</SearchBox>
                    <ToolItems $left={535}>
                        <ToolItem $w={79.5}><CirclePlus size={12} strokeWidth={1.4} />Add</ToolItem>
                        <ToolItem $w={60}><Funnel size={12} strokeWidth={1.4} />Filter</ToolItem>
                    </ToolItems>
                </ToolRow>
                <TableWrap $gap={11.5} $right={28}>
                    <TableHead thick label="RAID items" w={307} cols={RAID_COLS} titles={["Visibility", "Severity", "Status", "Workstream", "Owner"]} />
                    {raidRows.map((r) => (
                        <RowLine key={r.name} $active={r.active}>
                            <Tree $w={307}>
                                <HandleSlot>{r.active && <GripVertical size={11} strokeWidth={1.6} />}</HandleSlot>
                                <FlatSlot>{iconMap[r.icon]}</FlatSlot>
                                {r.name}
                                {r.active && (
                                    <RowActions>
                                        <Pencil size={13} strokeWidth={1.4} />
                                        <DotsBtn><Ellipsis size={12} /></DotsBtn>
                                    </RowActions>
                                )}
                            </Tree>
                            <Columns $thick>
                                {RAID_COLS.map((cw, i) => {
                                    const cell = r.cells[i];
                                    return (
                                        <Cell key={i} $w={cw}>
                                            {cell && (
                                                <Field $edit={r.active && i > 0}>
                                                    {cell.n}
                                                    {cell.chev && <Chev />}
                                                </Field>
                                            )}
                                        </Cell>
                                    );
                                })}
                            </Columns>
                        </RowLine>
                    ))}
                    <Scrollbar />
                </TableWrap>
            </Main>
        </Body>
    </PanelFrame>
);

/* Scope */
const SCOPE_COLS = [137, 123, 110];
const docBadge = <Badge $c="#0f55c9"><FileText size={9} strokeWidth={2} /></Badge>;
const orangeBadge = <Badge $c="#f9a11c"><Hand size={9} strokeWidth={2} /></Badge>;
const noteBadge = <Badge $c="#e9e9e9" $ink="#777"><MessageCircle size={10} strokeWidth={1.5} /><i>1</i></Badge>;
const who = (name: string) => <Person><Avatar $small>W</Avatar>{name}</Person>;

const scopeRows: RowData[] = [
    { level: 0, icon: "S", name: "Align", caret: "down" },
    { level: 1, icon: "plan", name: "Plan", caret: "down", cells: [{ n: <Badges><Badge $c="#ffb600" $ink="#222">M</Badge>{orangeBadge}</Badges> }, { n: chip("Not started") }] },
    { level: 2, icon: "gray", name: "Define Strategy", caret: "down", cells: [{ n: <Badges>{docBadge}</Badges> }, { n: chip("In progress") }, { n: who("Michael Jordan") }] },
    { level: 3, icon: "C", name: "Work Item Name", caret: "down", cells: [{ n: <Badges>{docBadge}{orangeBadge}<Badge $c="#fff" $ink="#4a5f96"><Shield size={10} strokeWidth={1.6} /></Badge>{noteBadge}</Badges> }, { n: chip("In progress") }, { n: who("Lebron James") }] },
    { level: 4, icon: "task", name: "Task Name", caret: "down", cells: [{}, { n: chip("Blocked") }] },
    { level: 5, icon: "sub", name: "Sub-task Name", cells: [{ n: <Badges>{docBadge}{noteBadge}</Badges> }, { n: chip("Not started") }, { n: who("Larry Bird") }] },
];

const ScopePanel = () => (
    <PanelFrame>
        <TopNav />
        <Body>
            <NavRail>
                <CreatePill><CirclePlus size={12} strokeWidth={1.3} />Create</CreatePill>
                <NavItem><Briefcase size={11} strokeWidth={1.5} />Workspaces</NavItem>
                <NavItem><Settings size={11} strokeWidth={1.5} />Start up<ChevronUp size={20} strokeWidth={0.9} /></NavItem>
                <NavItem $sub>Pursuit</NavItem>
                <NavItem $sub $on>Scope</NavItem>
                <NavItem $off><Briefcase size={11} strokeWidth={1.5} />Execute<ChevronDown size={20} strokeWidth={0.9} /></NavItem>
                <NavItem><AssetGlyph size={11} />Assets</NavItem>
                <NavItem><TriangleAlert size={11} strokeWidth={1.5} />RAID</NavItem>
                <NavItem><Wrench size={11} strokeWidth={1.5} />Apps</NavItem>
                <NavItem><ReportGlyph size={11} />Reports</NavItem>
                <NavItem><Settings size={11} strokeWidth={1.5} />Settings</NavItem>
                <NavItem $end><CollapseGlyph size={11} />Collapse</NavItem>
            </NavRail>
            <Main>
                <Crumbs>
                    <i />Pursuit and Deliver<u /><b>Pepsi - Guidewire Implementation</b>
                    <ChevronDown size={17} strokeWidth={1} />
                </Crumbs>
                <ScopeHead>
                    <div>
                        <h3>Scope</h3>
                        <p>Explore the PwC delivery methodology, and edit the attributes of your project such as Building Blocks and Technology. This allows us to apply the most relevant activities and work items to the project plan.</p>
                    </div>
                    <SolidBtn $w={108.6}><CirclePlus size={12} strokeWidth={1.3} />New scope</SolidBtn>
                </ScopeHead>
                <ScopeTabs>
                    <TabBar $scope>
                        <Tab>Scope</Tab>
                        <Tab $on>Estimate</Tab>
                        <Tab>FlexForecast</Tab>
                    </TabBar>
                    <ChangeBtn $w={143}><Plus size={12} strokeWidth={1.2} />Change Estimate</ChangeBtn>
                </ScopeTabs>
                <Cards>
                    <MetricsCard $w={385}>
                        <Metric $w={123}>
                            <small>Effort</small>
                            <BigNum>8,000<span>HRS</span></BigNum>
                            <Trend><TrendGlyph />20%<span>(2,000 HRS)</span></Trend>
                        </Metric>
                        <Metric $w={110}>
                            <small>Headcount</small>
                            <BigNum>80<span>FTE</span></BigNum>
                            <Trend><TrendGlyph />20%<span>(20 FTEs)</span></Trend>
                        </Metric>
                        <Metric $w={130}>
                            <small>Estimated Resource Cost</small>
                            <BigNum>$2,383,375</BigNum>
                            <Trend><TrendGlyph />3%<span>($64,945)</span></Trend>
                        </Metric>
                    </MetricsCard>
                    <MixCard $w={220}>
                        <svg width="60" height="60" viewBox="0 0 60 60" fill="none">
                            <circle cx="30" cy="30" r="25" stroke="#f8caca" strokeWidth="9" />
                            <circle cx="30" cy="30" r="25" stroke="#e22e1c" strokeWidth="9" strokeDasharray="36 200" transform="rotate(-90 30 30) scale(1 -1) translate(0 -60)" />
                        </svg>
                        <MixText>
                            <h4>Estimate Staff Mix</h4>
                            <Legend $c="#f8caca"><i />Acceleration Centers - 80%</Legend>
                            <Legend $c="#e22e1c"><i />Domestic - 20%</Legend>
                        </MixText>
                    </MixCard>
                    <UsageCard $w={155}>
                        <h4>PwC Accelerator Usage</h4>
                        <UsageRow>
                            <UsedNote>2 used out of 4 <b>MORE</b></UsedNote>
                            <Gauge>
                                <svg width="78" height="39" viewBox="0 0 78 39" fill="none">
                                    <path d="M6.5 38.5a32.5 32.5 0 0 1 65 0" stroke="#ffb600" strokeWidth="12.5" />
                                </svg>
                                <span className="pct">56%</span>
                                <span className="val">VALUE</span>
                                <span className="lo">0%</span>
                                <span className="hi">100%</span>
                            </Gauge>
                        </UsageRow>
                    </UsageCard>
                </Cards>
                <ToolRow $gap={25.4}>
                    <SearchBox><Search size={12} strokeWidth={1.5} />Search</SearchBox>
                    <ToolItems $left={149.5}>
                        <ToolItem $w={74}><CirclePlus size={11} strokeWidth={1.4} />Add</ToolItem>
                        <ToolItem $w={78}><Funnel size={12} strokeWidth={1.4} />Filter</ToolItem>
                        <ToolItem $w={131}><GroupGlyph />Group by: Stage</ToolItem>
                        <ToolItem $w={124}><AlignLeft size={12} strokeWidth={1.4} />Level: Custom</ToolItem>
                        <ToolItem $w={32}><Diamond size={14} strokeWidth={1.1} /></ToolItem>
                        <ToolItem $w={20}><SliderGlyph /></ToolItem>
                    </ToolItems>
                </ToolRow>
                <TableWrap $right={30.6}>
                    <TableHead label="Scope" w={414} cols={SCOPE_COLS} titles={["Contents", "Status", "Owner"]} />
                    {scopeRows.map((r, i) => (
                        <TreeRow key={i} row={r} w={414} step={27.3} cols={SCOPE_COLS} />
                    ))}
                    <TableFoot>
                        <FootGhost $w={80}>Save draft</FootGhost>
                        <FootSolid $w={150}>Confirm scope &amp; estimate</FootSolid>
                    </TableFoot>
                </TableWrap>
            </Main>
        </Body>
    </PanelFrame>
);

/* Backlog */
const BACK_COLS = [145, 123, 122.5, 100];
const story = (crit: string, edit = false): CellData[] => [
    { n: crit },
    { n: "Workshop demo", chev: edit },
    { n: chip("Identified"), chev: edit },
    { n: "Select persona..." },
];

const backRows: RowData[] = [
    { level: 1, icon: "l1", name: "Level One", caret: "down", check: "on", active: true, tools: "plain" },
    { level: 2, icon: "l2", name: "Level Two", caret: "down", check: "off" },
    { level: 3, icon: "l3", name: "Level Three", caret: "down", check: "off" },
    { level: 4, icon: "l4", name: "Level Four", caret: "down", check: "off", active: true, cells: story("1", true) },
    { level: 5, icon: "l5", name: "Level Five", caret: "down", check: "off", cells: story("0") },
    { level: 6, icon: "req", name: "Requirements", caret: "down", check: "off" },
    { level: 7, icon: "story", name: "User Story", caret: "down", check: "off" },
    { level: 8, icon: "cases", name: "Test Cases", caret: "down", check: "off", cells: story("5") },
    { level: 9, icon: "steps", name: "Test Steps", caret: "down", check: "off", cells: story("3") },
    { level: 1, icon: "l1", name: "Work Item Name", caret: "down", check: "off" },
    { level: 2, icon: "l2", name: "Work Item Name", caret: "down", check: "off" },
    { level: 3, icon: "l3", name: "Work Item Name", caret: "down", check: "off" },
];

const BacklogPanel = () => (
    <PanelFrame>
        <TopNav />
        <Body>
            <SideRail items={["home", "chart", "plan", "list", "risk", "folder", "asset", "tool", "report", "gear"]} on="list" />
            <Main>
                <Workspace name="Concourse Workspace Name" />
                <Tabs items={["First", "Second", "Third", "Fourth"]} />
                <Tools group="Group by: Lorem" />
                <TableWrap>
                    <TableHead
                        label="Deliverables"
                        w={421}
                        cols={BACK_COLS}
                        titles={[<>Acceptance Criteria<PinBox><Pin size={11} strokeWidth={1.4} /></PinBox></>, "Workshop Name", "Status", "Persona"]}
                    />
                    {backRows.map((r, i) => (
                        <TreeRow key={i} row={r} w={421} step={13.6} cols={BACK_COLS} />
                    ))}
                </TableWrap>
            </Main>
        </Body>
    </PanelFrame>
);

export default function App() {
    return (
        <>
            <GlobalStyle />
            <Page>
                <Title>Concouse 2.0 Tables<span>created with Concourse Kit</span></Title>
                <Board>
                    <Section>
                        <SectionLabel>Project Plan List View</SectionLabel>
                        <PlanPanel rows={planRowsA}>
                            <HintBubble>Convert</HintBubble>
                            <BulkSelection on />
                            <CursorHand><Hand size={11} strokeWidth={1.5} /></CursorHand>
                        </PlanPanel>
                    </Section>
                    <Section>
                        <SectionLabel>PDM Table</SectionLabel>
                        <PdmPanel />
                    </Section>
                    <Section>
                        <SectionLabel>RAID Table</SectionLabel>
                        <RaidPanel />
                    </Section>
                    <Section>
                        <SectionLabel $tight>Project Plan List View</SectionLabel>
                        <PlanPanel rows={planRowsB}>
                            <DropLine />
                            <GhostBack />
                            <GhostCard>
                                <Dot $c="#5c5c5c"><Check size={7} strokeWidth={3} /></Dot>2 Tasks selected
                                <em><Hand size={10} strokeWidth={1.5} /></em>
                            </GhostCard>
                            <BulkSelection />
                        </PlanPanel>
                    </Section>
                    <Section>
                        <SectionLabel $tight>Pursuit Scope Table</SectionLabel>
                        <ScopePanel />
                    </Section>
                    <Section>
                        <SectionLabel $tight>Backlog Table</SectionLabel>
                        <BacklogPanel />
                    </Section>
                </Board>
            </Page>
        </>
    );
}
